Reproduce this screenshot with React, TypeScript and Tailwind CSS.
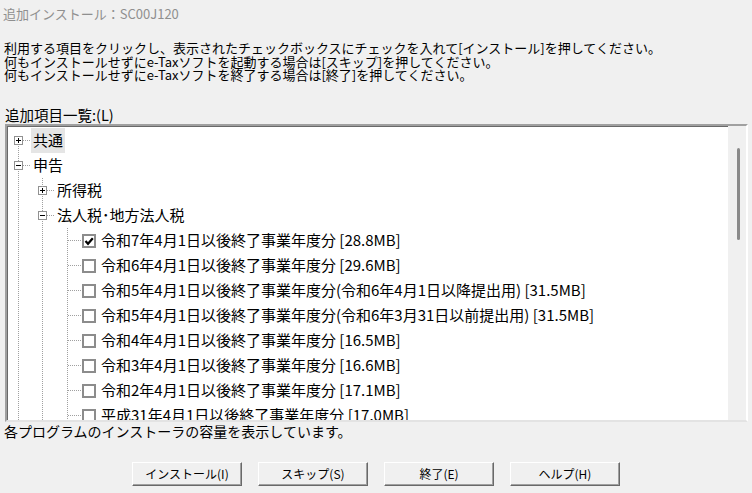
import React from 'react';

type Row = {
  level: 0 | 1 | 2;
  label: string;
  expander?: 'plus' | 'minus';
  checked?: boolean;
  selected?: boolean;
};

const rows: Row[] = [
  { level: 0, expander: 'plus', label: '共通', selected: true },
  { level: 0, expander: 'minus', label: '申告' },
  { level: 1, expander: 'plus', label: '所得税' },
  { level: 1, expander: 'minus', label: '法人税･地方法人税' },
  { level: 2, checked: true, label: '令和7年4月1日以後終了事業年度分 [28.8MB]' },
  { level: 2, label: '令和6年4月1日以後終了事業年度分 [29.6MB]' },
  { level: 2, label: '令和5年4月1日以後終了事業年度分(令和6年4月1日以降提出用) [31.5MB]' },
  { level: 2, label: '令和5年4月1日以後終了事業年度分(令和6年3月31日以前提出用) [31.5MB]' },
  { level: 2, label: '令和4年4月1日以後終了事業年度分 [16.5MB]' },
  { level: 2, label: '令和3年4月1日以後終了事業年度分 [16.6MB]' },
  { level: 2, label: '令和2年4月1日以後終了事業年度分 [17.1MB]' },
  { level: 2, label: '平成31年4月1日以後終了事業年度分 [17.0MB]' },
];

const ROW_H = 25;
const TOP = 2;
const center = (i: number) => TOP + ROW_H * i + 12.5;

function Expander({ kind }: { kind: 'plus' | 'minus' }) {
  return (
    <svg width="9" height="9" viewBox="0 0 9 9" className="shrink-0" shapeRendering="crispEdges">
      <rect x="0.5" y="0.5" width="8" height="8" fill="#fff" stroke="#919191" />
      <line x1="2" y1="4.5" x2="7" y2="4.5" stroke="#000" />
      {kind === 'plus' && <line x1="4.5" y1="2" x2="4.5" y2="7" stroke="#000" />}
    </svg>
  );
}

function CheckBox({ checked }: { checked?: boolean }) {
  return (
    <svg width="14" height="14" viewBox="0 0 14 14" className="shrink-0">
      <rect x="1" y="1" width="12" height="12" fill="#fff" stroke="#8c8c8c" strokeWidth="2" />
      {checked && <path d="M3.5 7 L6 9.8 L10.8 4.2" fill="none" stroke="#000" strokeWidth="2.2" />}
    </svg>
  );
}

function TreeLines() {
  const dot = { stroke: '#a0a0a0', strokeDasharray: '1 1', shapeRendering: 'crispEdges' as const };
  const bottom = 300;
  return (
    <svg className="absolute left-0 top-0 pointer-events-none" width="120" height="300">
      {/* root level */}
      <line x1="11.5" y1={center(0) + 5} x2="11.5" y2={center(1) - 4} {...dot} />
      <line x1="11.5" y1={center(1) + 5} x2="11.5" y2={bottom} {...dot} />
      <line x1="16" y1={center(0)} x2="23" y2={center(0)} {...dot} />
      <line x1="16" y1={center(1)} x2="23" y2={center(1)} {...dot} />
      {/* 申告 children */}
      <line x1="35.5" y1={TOP + ROW_H * 2} x2="35.5" y2={center(2) - 4} {...dot} />
      <line x1="35.5" y1={center(2) + 5} x2="35.5" y2={center(3) - 4} {...dot} />
      <line x1="35.5" y1={center(3) + 5} x2="35.5" y2={bottom} {...dot} />
      <line x1="40" y1={center(2)} x2="47" y2={center(2)} {...dot} />
      <line x1="40" y1={center(3)} x2="47" y2={center(3)} {...dot} />
      {/* 法人税 children */}
      <line x1="60.5" y1={TOP + ROW_H * 4} x2="60.5" y2={bottom} {...dot} />
      {rows.map((r, i) =>
        r.level === 2 ? <line key={i} x1="61" y1={center(i)} x2="74" y2={center(i)} {...dot} /> : null,
      )}
    </svg>
  );
}

function TreeRow({ row }: { row: Row }) {
  const pad = row.level === 0 ? 'pl-[7px]' : row.level === 1 ? 'pl-[31px]' : 'pl-[75px]';
  return (
    <div className={`h-[25px] flex items-center whitespace-nowrap ${pad}`}>
      {row.expander ? <Expander kind={row.expander} /> : <CheckBox checked={row.checked} />}
      <span
        className={`h-full flex items-center ${row.expander ? 'ml-[8px] px-[2px]' : 'ml-[5px]'} ${
          row.selected ? 'bg-[#e5e5e5]' : ''
        }`}
      >
        {row.label}
      </span>
    </div>
  );
}

function Btn({ children }: { children: React.ReactNode }) {
  return (
    <button className="w-[110px] h-[24px] flex items-center justify-center bg-[#f0f0f0] border border-t-white border-l-white border-r-[#696969] border-b-[#696969] shadow-[inset_-1px_-1px_0_#a0a0a0] text-[12px] text-black">
      {children}
    </button>
  );
}

export default function App() {
  return (
    <div className="w-[752px] h-[493px] overflow-hidden bg-[#f0f0f0] text-black font-['Noto_Sans_CJK_JP','Noto_Sans',sans-serif]">
      <div className="h-[27px] pl-[3px] flex items-center text-[13px] text-[#8f8f8f]">追加インストール：SC00J120</div>

      <div className="mt-[14px] pl-[4px] text-[13px] leading-[13.5px] whitespace-nowrap">
        <div>利用する項目をクリックし、表示されたチェックボックスにチェックを入れて[インストール]を押してください。</div>
        <div>何もインストールせずにe-Taxソフトを起動する場合は[スキップ]を押してください。</div>
        <div>何もインストールせずにe-Taxソフトを終了する場合は[終了]を押してください。</div>
      </div>

      <div className="mt-[25.5px] pl-[5px] text-[14.5px] leading-[16px]">追加項目一覧:(L)</div>

      <div className="mt-[1px] ml-[5px] w-[743px] h-[298px] flex bg-white border-2 border-t-[#a0a0a0] border-l-[#a0a0a0] border-r-white border-b-[#e3e3e3] shadow-[inset_1px_1px_0_#696969]">
        <div className="relative flex-1 overflow-hidden pt-[2px] text-[15px]">
          <TreeLines />
          {rows.map((r, i) => (
            <TreeRow key={i} row={r} />
          ))}
        </div>
        <div className="w-[18px] bg-[#f0f0f0] flex flex-col">
          <div className="mt-[22px] ml-[9px] w-[3px] h-[92px] rounded-full bg-[#8a8a8a]" />
        </div>
      </div>

      <div className="mt-[1px] pl-[4px] text-[14px] leading-[16px]">各プログラムのインストーラの容量を表示しています。</div>

      <div className="mt-[23px] flex justify-center gap-[16px]">
        <Btn>インストール(I)</Btn>
        <Btn>スキップ(S)</Btn>
        <Btn>終了(E)</Btn>
        <Btn>ヘルプ(H)</Btn>
      </div>
    </div>
  );
}
